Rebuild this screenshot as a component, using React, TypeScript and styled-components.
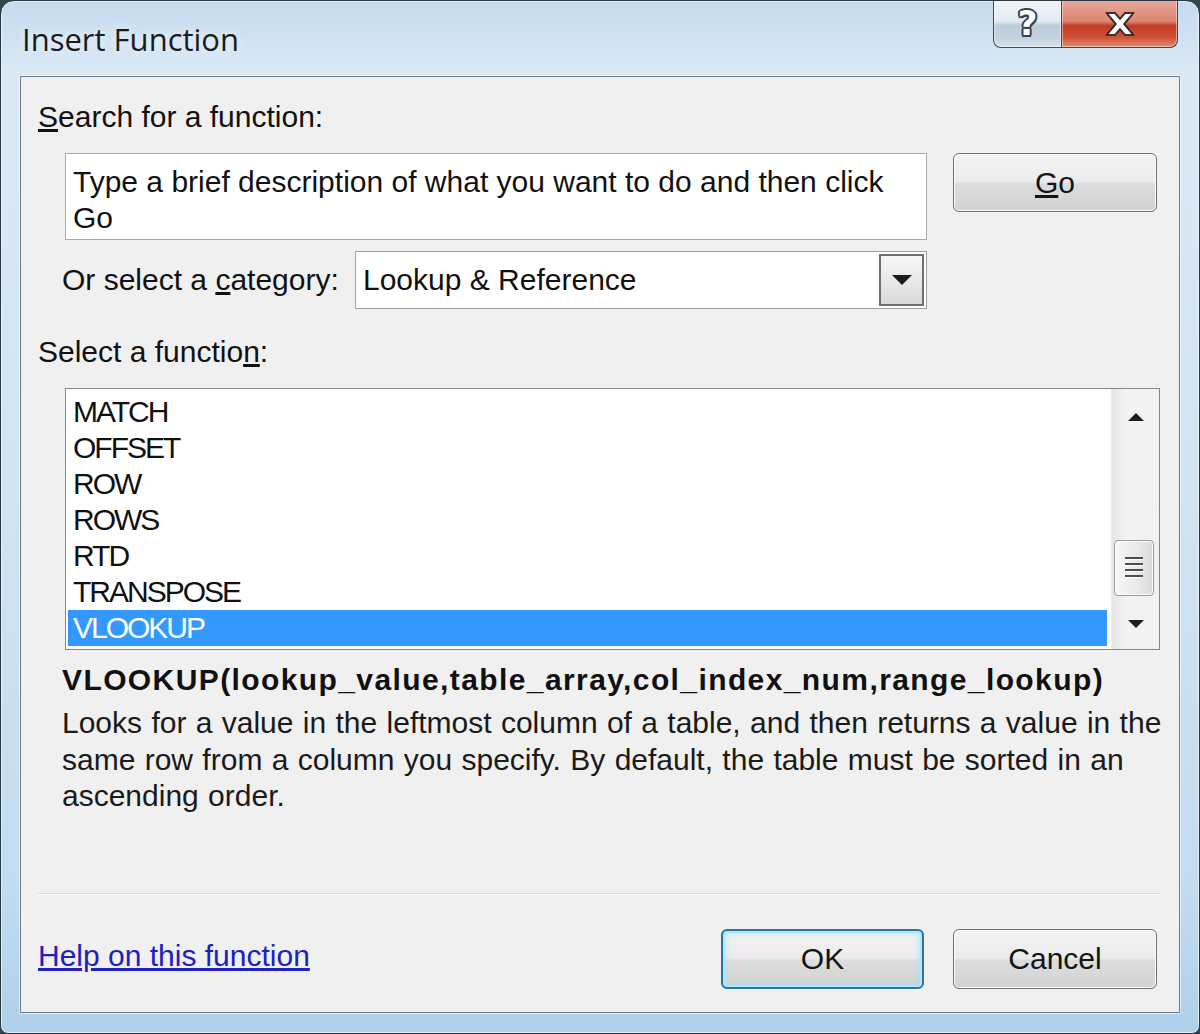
import { createGlobalStyle, styled } from 'styled-components';

const GlobalStyle = createGlobalStyle`
  html, body {
    margin: 0;
    padding: 0;
    background: #33454f;
  }
  body {
    font-family: "Liberation Sans", Arial, sans-serif;
    color: #111;
  }
`;

const Window = styled.div`
  width: 1200px;
  height: 1034px;
  box-sizing: border-box;
  border: 1px solid #27363f;
  border-radius: 14px 14px 8px 8px;
  background: linear-gradient(180deg, #c4dbef 0%, #dbe9f6 7%, #d2e4f3 45%, #c3dcf0 85%, #aed0ea 100%);
  box-shadow: inset 0 0 0 1px rgba(255, 255, 255, 0.6);
  display: flex;
  flex-direction: column;
  padding: 0 19px 20px 19px;
  overflow: hidden;
`;

const TitleBar = styled.div`
  height: 75px;
  display: flex;
  align-items: flex-start;
  flex-shrink: 0;
`;

const Title = styled.div`
  margin: 20px 0 0 2px;
  font-family: "Open Sans", "Noto Sans", sans-serif;
  font-size: 31px;
  line-height: 36px;
  color: #1b1b1b;
  text-shadow: 0 0 8px rgba(255, 255, 255, 0.9);
`;

const CaptionButtons = styled.div`
  display: flex;
  margin: -1px 2px 0 auto;
`;

type CaptionProps = { $kind: 'help' | 'close' };
const CaptionButton = styled.div<CaptionProps>`
  box-sizing: border-box;
  height: 48px;
  width: ${(p) => (p.$kind === 'help' ? '69px' : '116px')};
  border: 1px solid #3a4853;
  border-top: none;
  border-left: ${(p) => (p.$kind === 'close' ? 'none' : '1px solid #3a4853')};
  border-radius: ${(p) => (p.$kind === 'help' ? '0 0 0 8px' : '0 0 8px 0')};
  background: ${(p) =>
    p.$kind === 'help'
      ? 'linear-gradient(180deg, #f3f6f9 0%, #e2eaf1 45%, #bccbd9 55%, #c7d5e2 85%, #d9e4ee 100%)'
      : 'linear-gradient(180deg, #eaa99d 0%, #dc8572 45%, #c43c25 55%, #cf5338 80%, #e38a6f 100%)'};
  box-shadow: inset 0 0 0 1px rgba(255, 255, 255, 0.45);
  display: flex;
  align-items: center;
  justify-content: center;
`;

const HelpGlyph = styled.span`
  font-family: "DejaVu Sans", sans-serif;
  font-weight: bold;
  font-size: 34px;
  line-height: 1;
  color: #fff;
  text-shadow:
    -2px 0 0 #34434e, 2px 0 0 #34434e, 0 -2px 0 #34434e, 0 2px 0 #34434e,
    -1.5px -1.5px 0 #34434e, 1.5px 1.5px 0 #34434e, -1.5px 1.5px 0 #34434e, 1.5px -1.5px 0 #34434e;
  margin-top: -2px;
`;

const Client = styled.div`
  flex: 1;
  box-sizing: border-box;
  border: 1px solid #6f7c87;
  box-shadow: 0 0 0 1px rgba(255, 255, 255, 0.55);
  background: #f0f0f0;
  padding: 22px 19px 23px 17px;
  display: flex;
  flex-direction: column;
  font-size: 30px;
  line-height: 36px;
`;

type LabelProps = { $indent?: boolean; $top?: number };
const Label = styled.div<LabelProps>`
  margin-left: ${(p) => (p.$indent ? '24px' : '0')};
  margin-top: ${(p) => p.$top ?? 0}px;
  white-space: nowrap;
`;

const SearchRow = styled.div`
  display: flex;
  align-items: flex-start;
  margin: 18px 3px 0 27px;
`;

const SearchBox = styled.div`
  box-sizing: border-box;
  width: 862px;
  height: 87px;
  border: 1px solid #a7abb0;
  background: #fff;
  padding: 10px 7px 0 7px;
  white-space: nowrap;
`;

type ButtonProps = { $default?: boolean; $width: number };
const Button = styled.div<ButtonProps>`
  box-sizing: border-box;
  width: ${(p) => p.$width}px;
  height: ${(p) => (p.$default !== undefined ? 60 : 59)}px;
  border: ${(p) => (p.$default ? '2px solid #2f7398' : '1px solid #707070')};
  border-radius: 6px;
  background: linear-gradient(180deg, #f3f3f3 0%, #ececec 48%, #dddddd 52%, #d2d2d2 100%);
  box-shadow: ${(p) =>
    p.$default
      ? 'inset 0 0 0 2px #a9e8fb, inset 0 0 6px 2px rgba(150, 225, 250, 0.8)'
      : 'inset 0 0 0 1px #fbfbfb'};
  display: flex;
  align-items: center;
  justify-content: center;
  color: #141414;
  flex-shrink: 0;
`;

const CategoryRow = styled.div`
  display: flex;
  align-items: center;
  margin: 11px 233px 0 24px;
`;

const Combo = styled.div`
  box-sizing: border-box;
  width: 572px;
  height: 58px;
  margin-left: auto;
  border: 1px solid #9aa1a8;
  background: #fff;
  display: flex;
  align-items: center;
  padding: 2px 2px 2px 7px;
`;

const ComboText = styled.span`
  flex: 1;
`;

const ComboArrow = styled.div`
  box-sizing: border-box;
  width: 45px;
  height: 52px;
  border: 2px solid #6f6f6f;
  background: linear-gradient(180deg, #f7f7f7 0%, #e9e9e9 50%, #d9d9d9 100%);
  display: flex;
  align-items: center;
  justify-content: center;
`;

const ListBox = styled.div`
  box-sizing: border-box;
  height: 262px;
  margin: 18px 0 0 27px;
  border: 1px solid #82878f;
  background: #fff;
  display: flex;
`;

const Items = styled.div`
  flex: 1;
  padding: 5px 4px 0 2px;
  overflow: hidden;
`;

type ItemProps = { $selected?: boolean };
const Item = styled.div<ItemProps>`
  height: 36px;
  padding-left: 5px;
  letter-spacing: -2px;
  white-space: nowrap;
  background: ${(p) => (p.$selected ? '#3399ff' : 'transparent')};
  color: ${(p) => (p.$selected ? '#fff' : '#111')};
`;

const ScrollBar = styled.div`
  width: 47px;
  display: flex;
  flex-direction: column;
  background: linear-gradient(90deg, #e6e6e6 0%, #f3f3f3 30%, #f1f1f1 100%);
  border-left: 1px solid #ececec;
`;

type ArrowProps = { $h: number };
const ScrollArrow = styled.div<ArrowProps>`
  height: ${(p) => p.$h}px;
  display: flex;
  align-items: center;
  justify-content: center;
  flex-shrink: 0;
`;

const Track = styled.div`
  flex: 1;
  display: flex;
  flex-direction: column;
  justify-content: flex-end;
  align-items: flex-start;
  padding: 0 0 3px 2px;
`;

const Thumb = styled.div`
  box-sizing: border-box;
  width: 40px;
  height: 56px;
  border: 1px solid #979797;
  border-radius: 4px;
  background: linear-gradient(90deg, #f6f6f6 0%, #ececec 50%, #dcdcdc 100%);
  box-shadow: inset 0 0 0 1px #fff;
  display: flex;
  align-items: center;
  justify-content: center;
`;

const Grip = styled.div`
  width: 18px;
  height: 23px;
  background: repeating-linear-gradient(180deg, #4d4d4d 0 2px, #ffffff 2px 3px, transparent 3px 6px);
`;

const Syntax = styled.div`
  margin: 12px 0 0 24px;
  font-weight: bold;
  letter-spacing: 1.4px;
  white-space: nowrap;
  color: #111;
`;

const Description = styled.div`
  margin: 7px 0 0 24px;
  line-height: 36.5px;
  white-space: nowrap;
  word-spacing: 1px;
  color: #1a1a1a;
`;

const Spacer = styled.div`
  flex: 1;
`;

const Separator = styled.div`
  border-top: 1px solid #d6d6d6;
  border-bottom: 1px solid #ffffff;
  margin-right: -1px;
`;

const Footer = styled.div`
  display: flex;
  align-items: center;
  gap: 29px;
  margin: 34px 3px 0 0;
  height: 60px;
`;

const HelpLink = styled.a`
  color: #2020c0;
  text-decoration: underline;
  margin-right: auto;
  margin-top: -6px;
  cursor: pointer;
`;

const functions = ['MATCH', 'OFFSET', 'ROW', 'ROWS', 'RTD', 'TRANSPOSE', 'VLOOKUP'];

function Triangle({ up, w, h }: { up?: boolean; w: number; h: number }) {
  return (
    <svg width={w} height={h} viewBox="0 0 16 8">
      <path d={up ? 'M0 8 L8 0 L16 8 Z' : 'M0 0 L16 0 L8 8 Z'} fill="#1c1c1c" />
    </svg>
  );
}

export default function App() {
  return (
    <>
      <GlobalStyle />
      <Window>
        <TitleBar>
          <Title>Insert Function</Title>
          <CaptionButtons>
            <CaptionButton $kind="help">
              <HelpGlyph>?</HelpGlyph>
            </CaptionButton>
            <CaptionButton $kind="close">
              <svg width="34" height="26" viewBox="0 0 40 30">
                <path
                  d="M4 2 L14 2 L20 9 L26 2 L36 2 L25 15 L36 28 L26 28 L20 21 L14 28 L4 28 L15 15 Z"
                  fill="#ffffff"
                  stroke="#3b3030"
                  strokeWidth="2.4"
                  strokeLinejoin="round"
                />
              </svg>
            </CaptionButton>
          </CaptionButtons>
        </TitleBar>
        <Client>
          <Label>
            <u>S</u>earch for a function:
          </Label>
          <SearchRow>
            <SearchBox>
              Type a brief description of what you want to do and then click
              <br />
              Go
            </SearchBox>
            <Button $width={204} style={{ marginLeft: 26 }}>
              <span>
                <u>G</u>o
              </span>
            </Button>
          </SearchRow>
          <CategoryRow>
            <span>
              Or select a <u>c</u>ategory:
            </span>
            <Combo>
              <ComboText>Lookup &amp; Reference</ComboText>
              <ComboArrow>
                <Triangle w={20} h={10} />
              </ComboArrow>
            </Combo>
          </CategoryRow>
          <Label $top={25}>
            Select a functio<u>n</u>:
          </Label>
          <ListBox>
            <Items>
              {functions.map((f) => (
                <Item key={f} $selected={f === 'VLOOKUP'}>
                  {f}
                </Item>
              ))}
            </Items>
            <ScrollBar>
              <ScrollArrow $h={56}>
                <Triangle up w={16} h={8} />
              </ScrollArrow>
              <Track>
                <Thumb>
                  <Grip />
                </Thumb>
              </Track>
              <ScrollArrow $h={50}>
                <Triangle w={16} h={8} />
              </ScrollArrow>
            </ScrollBar>
          </ListBox>
          <Syntax>VLOOKUP(lookup_value,table_array,col_index_num,range_lookup)</Syntax>
          <Description>
            Looks for a value in the leftmost column of a table, and then returns a value in the
            <br />
            same row from a column you specify. By default, the table must be sorted in an
            <br />
            ascending order.
          </Description>
          <Spacer />
          <Separator />
          <Footer>
            <HelpLink>Help on this function</HelpLink>
            <Button $default $width={203}>
              OK
            </Button>
            <Button $default={false} $width={204}>
              Cancel
            </Button>
          </Footer>
        </Client>
      </Window>
    </>
  );
}
